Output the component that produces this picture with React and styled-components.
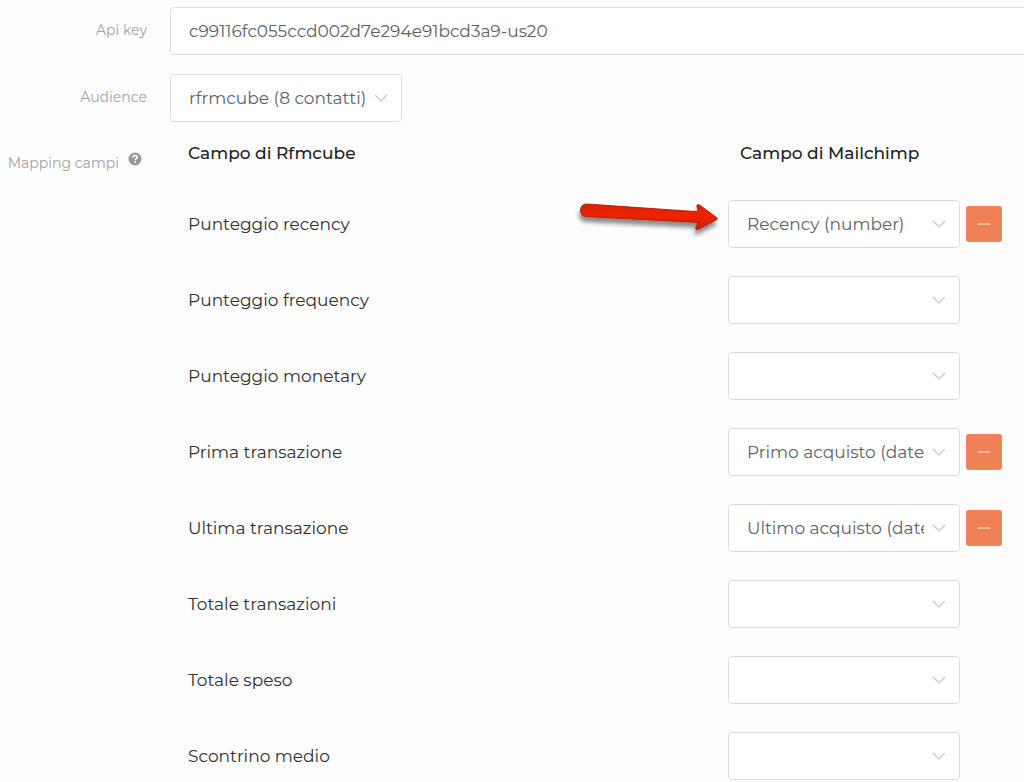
import React, { useState } from 'react';
import styled, { createGlobalStyle } from 'styled-components'

const mailchimpFields = [
  'Recency (number)',
  'Primo acquisto (date)',
  'Ultimo acquisto (date)',
]

const initialMapping = [
  { id: 'recency', label: 'Punteggio recency', value: 'Recency (number)', highlight: true },
  { id: 'frequency', label: 'Punteggio frequency', value: '' },
  { id: 'monetary', label: 'Punteggio monetary', value: '' },
  { id: 'first', label: 'Prima transazione', value: 'Primo acquisto (date)' },
  { id: 'last', label: 'Ultima transazione', value: 'Ultimo acquisto (date)' },
  { id: 'orders', label: 'Totale transazioni', value: '' },
  { id: 'spent', label: 'Totale speso', value: '' },
  { id: 'average', label: 'Scontrino medio', value: '' },
]

const Select = ({ children, ...props }) => (
  <SelectWrapper>
    <StyledSelect {...props}>{children}</StyledSelect>
    <Chevron viewBox="0 0 14 8" aria-hidden="true">
      <path d="M1 1l6 6 6-6" fill="none" stroke="#c3c5cd" strokeWidth="1.1" />
    </Chevron>
  </SelectWrapper>
)

const Arrow = () => (
  <ArrowSvg viewBox="0 4 148 48" aria-hidden="true">
    <defs>
      <linearGradient id="arrow-fill" x1="0" y1="0" x2="0" y2="1">
        <stop offset="0" stopColor="#d62408" />
        <stop offset="0.45" stopColor="#f02400" />
        <stop offset="1" stopColor="#c81e06" />
      </linearGradient>
      <filter id="arrow-shadow" x="-10%" y="-20%" width="120%" height="180%">
        <feDropShadow dx="-1" dy="5" stdDeviation="2" floodColor="#000" floodOpacity="0.45" />
      </filter>
    </defs>
    <path
      d="M6.500 8 L118.500 15.800 L117 11 Q116.500 7.500 119.500 9 L136.500 21.500 Q138 22.700 136.500 23.800 L118 33.300 Q115 34.500 116 31.500 L118 26.400 L5.500 20.500 Q0.500 19.500 0.500 14 Q1 8.200 6.500 8 Z"
      fill="url(#arrow-fill)"
      stroke="#b81c08"
      strokeWidth="1"
      strokeLinejoin="round"
      filter="url(#arrow-shadow)"
    />
  </ArrowSvg>
)

const App = () => {
  const [apiKey, setApiKey] = useState('c99116fc055ccd002d7e294e91bcd3a9-us20')
  const [mapping, setMapping] = useState(initialMapping)

  const updateField = (id, value) => {
    setMapping(mapping.map((item) => (item.id === id ? { ...item, value } : item)))
  }

  return (
    <>
      <GlobalStyle />
      <Form onSubmit={(e) => e.preventDefault()}>
        <Label htmlFor="api-key">Api key</Label>
        <Field>
          <Input id="api-key" type="text" value={apiKey} onChange={(e) => setApiKey(e.target.value)} />
        </Field>

        <Label htmlFor="audience">Audience</Label>
        <Field>
          <Select id="audience" defaultValue="rfrmcube">
            <option value="rfrmcube">rfrmcube (8 contatti)</option>
          </Select>
        </Field>

        <Label as="span" id="mapping-label" $help>
          Mapping campi
          <HelpIcon viewBox="0 0 14 14" aria-hidden="true">
            <circle cx="7" cy="7" r="6.5" fill="#999" />
            <path d="M5 5.600C5 4.300 5.900 3.600 7.100 3.600S9.200 4.300 9.200 5.400C9.200 6.700 7.200 6.800 7.200 8.300" fill="none" stroke="#fff" strokeWidth="1.500" />
            <rect x="6.400" y="9.300" width="1.600" height="1.600" fill="#fff" />
          </HelpIcon>
        </Label>
        <MappingTable aria-labelledby="mapping-label">
          <thead>
            <tr>
              <th>Campo di Rfmcube</th>
              <th>Campo di Mailchimp</th>
            </tr>
          </thead>
          <tbody>
            {mapping.map(({ id, label, value, highlight }) => (
              <tr key={id}>
                <td>
                  <NameCell>
                    <label htmlFor={id}>{label}</label>
                    {highlight && <Arrow />}
                  </NameCell>
                </td>
                <td>
                  <ValueCell>
                    <Select id={id} value={value} onChange={(e) => updateField(id, e.target.value)}>
                      <option value=""></option>
                      {mailchimpFields.map((field) => (
                        <option key={field} value={field}>{field}</option>
                      ))}
                    </Select>
                    {value && (
                      <RemoveButton type="button" aria-label="Rimuovi" onClick={() => updateField(id, '')}>
                        <svg width="12" height="2" viewBox="0 0 12 2" aria-hidden="true">
                          <path d="M0 1h12" stroke="#fbd9cc" strokeWidth="1.300" />
                        </svg>
                      </RemoveButton>
                    )}
                  </ValueCell>
                </td>
              </tr>
            ))}
          </tbody>
        </MappingTable>
      </Form>
    </>
  )
}

const GlobalStyle = createGlobalStyle`
  * {
    box-sizing: border-box;
  }
  body {
    margin: 0;
    background: #fdfdfd;
    color: #303133;
    font-family: Montserrat, Inter, sans-serif;
    font-size: 17px;
    line-height: 24px;
    overflow-x: hidden;
  }
`

const Form = styled.form`
  display: grid;
  grid-template-columns: 147px 1fr;
  column-gap: 23px;
  row-gap: 19px;
  padding-top: 7px;
`

const Label = styled.label`
  display: flex;
  justify-content: flex-end;
  align-items: flex-start;
  gap: 9px;
  padding-top: ${({ $help }) => ($help ? '10px' : '11px')};
  padding-right: ${({ $help }) => ($help ? '5px' : '0')};
  color: #a3a4a6;
  font-size: 14px;
  white-space: nowrap;
`

const HelpIcon = styled.svg`
  width: 14px;
  height: 14px;
  margin-top: 1px;
`

const Field = styled.div`
  display: flex;
  min-width: 0;
`

// the field runs on past the right edge of the panel
const Input = styled.input`
  flex: 1;
  height: 48px;
  margin-right: -8px;
  padding: 0 18px;
  border: 1px solid #dcdde6;
  border-radius: 4px;
  background: #fff;
  color: #606266;
  font: inherit;
  outline: none;
`

const SelectWrapper = styled.div`
  position: relative;
  width: 232px;
  height: 48px;
`

const StyledSelect = styled.select`
  appearance: none;
  width: 100%;
  height: 100%;
  padding: 0 35px 0 18px;
  border: 1px solid #dcdde6;
  border-radius: 4px;
  background: #fff;
  color: #606266;
  font: inherit;
  outline: none;
`

const Chevron = styled.svg`
  position: absolute;
  top: 20px;
  right: 14px;
  width: 14px;
  height: 8px;
  pointer-events: none;
`

const MappingTable = styled.table`
  width: 100%;
  border-collapse: collapse;
  table-layout: fixed;

  th {
    height: 45px;
    padding: 0 0 21px 18px;
    color: #222;
    font-weight: 500;
    text-align: left;
  }
  th:last-child {
    width: 296px;
    padding-left: 12px;
  }
  td {
    height: 76px;
    padding: 0;
  }
`

const NameCell = styled.div`
  display: flex;
  align-items: center;
  justify-content: space-between;
  height: 48px;
  padding-left: 18px;
`

const ArrowSvg = styled.svg`
  width: 148px;
  height: 48px;
  overflow: visible;
`

const ValueCell = styled.div`
  display: flex;
  align-items: center;
  gap: 6px;
`

const RemoveButton = styled.button`
  display: flex;
  align-items: center;
  justify-content: center;
  width: 36px;
  height: 36px;
  padding: 0;
  border: 0;
  border-radius: 3px;
  background: #f08055;
  cursor: pointer;
`

export default App
